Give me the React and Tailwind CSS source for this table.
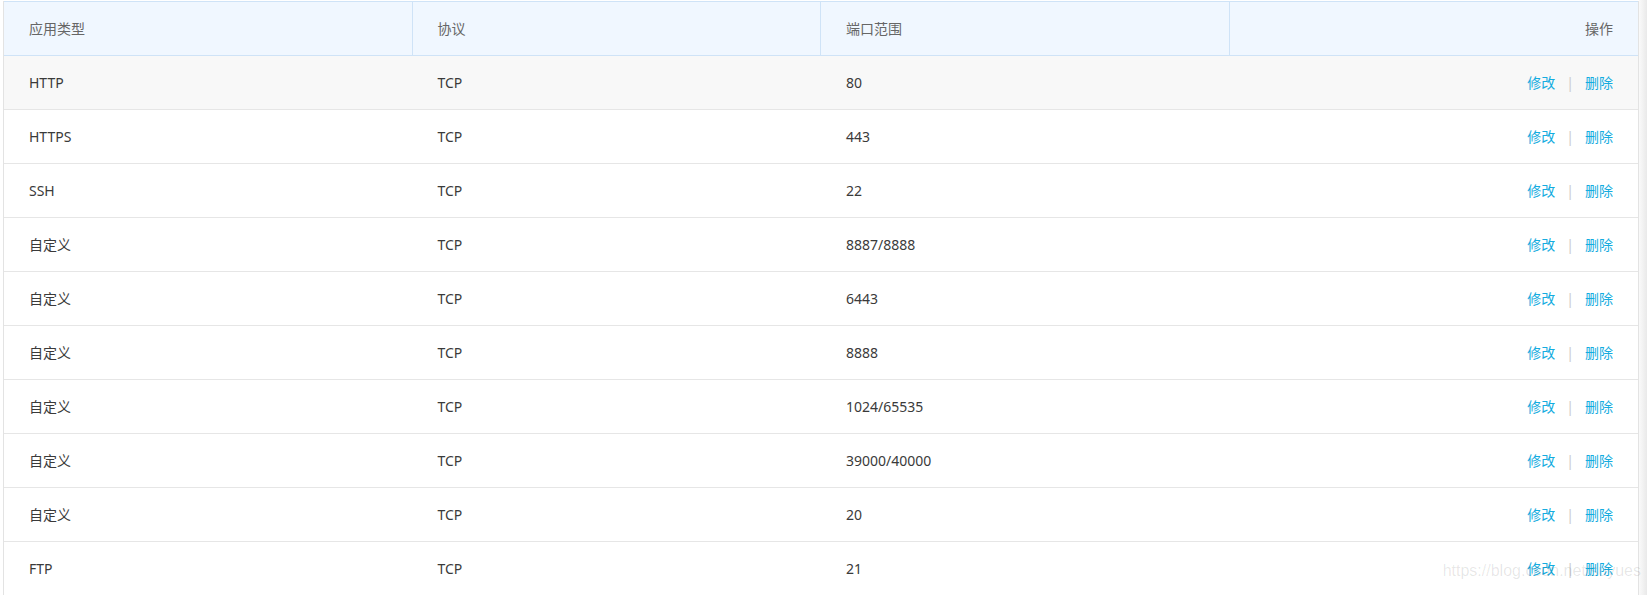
import React from "react";

const rows = [
  { type: "HTTP", proto: "TCP", port: "80", hover: true },
  { type: "HTTPS", proto: "TCP", port: "443" },
  { type: "SSH", proto: "TCP", port: "22" },
  { type: "自定义", proto: "TCP", port: "8887/8888" },
  { type: "自定义", proto: "TCP", port: "6443" },
  { type: "自定义", proto: "TCP", port: "8888" },
  { type: "自定义", proto: "TCP", port: "1024/65535" },
  { type: "自定义", proto: "TCP", port: "39000/40000" },
  { type: "自定义", proto: "TCP", port: "20" },
  { type: "FTP", proto: "TCP", port: "21" },
];

const Row = ({ type, proto, port, hover }) => {
  return (
    <div
      className={`grid grid-cols-4 h-[54px] border-b border-[#e6e6e6] items-center text-[14px] text-[#3a3a3a] ${
        hover ? "bg-[#f8f8f8]" : "bg-white"
      }`}
    >
      <div className="pl-[25px]">{type}</div>
      <div className="pl-[25px]">{proto}</div>
      <div className="pl-[25px]">{port}</div>
      <div className="flex justify-end items-center pr-[25px]">
        <a className="text-[#14ace0] cursor-pointer">修改</a>
        <span className="mx-[11px] text-[#ccc]">|</span>
        <a className="text-[#14ace0] cursor-pointer">删除</a>
      </div>
    </div>
  );
};

export default function App() {
  return (
    <div
      className="relative flex w-[1647px] h-[595px] overflow-hidden bg-white pl-[3px]"
      style={{ fontFamily: '"Noto Sans", "Noto Sans CJK SC", sans-serif' }}
    >
      <div className="w-[1636px] mt-px border-l border-[#e3e3e3] border-r">
        <div className="grid grid-cols-4 h-[55px] bg-[#f0f7ff] border-t border-b border-[#cfe3f7] text-[14px] text-[#666] items-center">
          <div className="pl-[25px] h-full flex items-center border-r border-[#cfe3f7]">应用类型</div>
          <div className="pl-[25px] h-full flex items-center border-r border-[#cfe3f7]">协议</div>
          <div className="pl-[25px] h-full flex items-center border-r border-[#cfe3f7]">端口范围</div>
          <div className="pr-[25px] h-full flex items-center justify-end">操作</div>
        </div>
        {rows.map((r, i) => (
          <Row key={i} {...r} />
        ))}
      </div>
      <div className="flex-1 bg-gradient-to-r from-[#fafafa] to-[#e9e9e9]" />
      <div
        className="absolute right-[6px] bottom-[12px] text-[16px] text-black/10"
        style={{ fontFamily: '"Liberation Sans", sans-serif' }}
      >
        https://blog.csdn.net/suyues
      </div>
    </div>
  );
}
